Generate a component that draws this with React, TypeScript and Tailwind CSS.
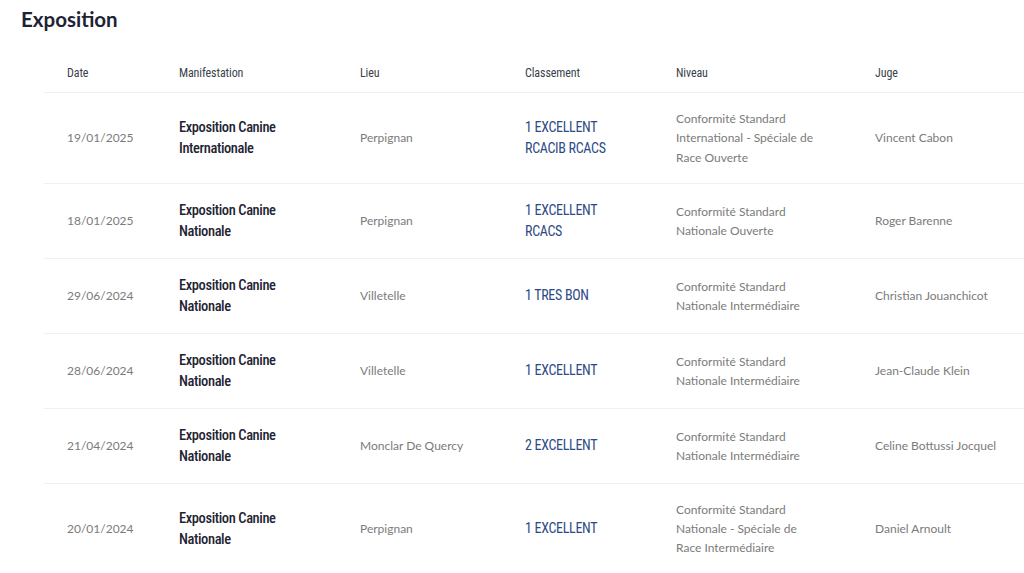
import React from "react";

type Row = {
  date: string;
  manifestation: string;
  lieu: string;
  classement: string;
  niveau: string;
  juge: string;
};

const rows: Row[] = [
  {
    date: "19/01/2025",
    manifestation: "Exposition Canine Internationale",
    lieu: "Perpignan",
    classement: "1 EXCELLENT RCACIB RCACS",
    niveau: "Conformité Standard International - Spéciale de Race Ouverte",
    juge: "Vincent Cabon",
  },
  {
    date: "18/01/2025",
    manifestation: "Exposition Canine Nationale",
    lieu: "Perpignan",
    classement: "1 EXCELLENT RCACS",
    niveau: "Conformité Standard Nationale Ouverte",
    juge: "Roger Barenne",
  },
  {
    date: "29/06/2024",
    manifestation: "Exposition Canine Nationale",
    lieu: "Villetelle",
    classement: "1 TRES BON",
    niveau: "Conformité Standard Nationale Intermédiaire",
    juge: "Christian Jouanchicot",
  },
  {
    date: "28/06/2024",
    manifestation: "Exposition Canine Nationale",
    lieu: "Villetelle",
    classement: "1 EXCELLENT",
    niveau: "Conformité Standard Nationale Intermédiaire",
    juge: "Jean-Claude Klein",
  },
  {
    date: "21/04/2024",
    manifestation: "Exposition Canine Nationale",
    lieu: "Monclar De Quercy",
    classement: "2 EXCELLENT",
    niveau: "Conformité Standard Nationale Intermédiaire",
    juge: "Celine Bottussi Jocquel",
  },
  {
    date: "20/01/2024",
    manifestation: "Exposition Canine Nationale",
    lieu: "Perpignan",
    classement: "1 EXCELLENT",
    niveau: "Conformité Standard Nationale - Spéciale de Race Intermédiaire",
    juge: "Daniel Arnoult",
  },
];

const cols = "grid grid-cols-[112px_181px_165px_151px_199px_1fr] pl-[23px]";
const narrow = "font-['Roboto_Condensed','Roboto',sans-serif]";
const body = "font-['Lato','Open_Sans',sans-serif]";

export default function App() {
  return (
    <div className="min-h-screen bg-white pt-[7px]">
      <h2
        className={`pl-[21px] text-[20.5px] font-bold leading-[24px] text-[#1e2235] ${body}`}
      >
        Exposition
      </h2>
      <div className="ml-[44px] mt-[23px]">
        {/* en-tête */}
        <div
          className={`${cols} border-b border-[#f0f0f0] py-[9px] text-[12px] leading-[20px] tracking-[-0.1px] text-[#3a3f4a] ${narrow}`}
        >
          <div>Date</div>
          <div>Manifestation</div>
          <div>Lieu</div>
          <div>Classement</div>
          <div>Niveau</div>
          <div>Juge</div>
        </div>
        {rows.map((r) => (
          <div
            key={r.date}
            className={`${cols} items-center border-b border-[#f0f0f0] py-4 text-[12px] text-[#7b7b7b] ${body}`}
          >
            <div>{r.date}</div>
            <div
              className={`max-w-[115px] text-[14.5px] font-medium leading-[21px] tracking-[-0.4px] text-[#1f2433] ${narrow}`}
            >
              {r.manifestation}
            </div>
            <div>{r.lieu}</div>
            <div
              className={`max-w-[100px] text-[14px] leading-[21px] tracking-[-0.3px] text-[#2c4a86] ${narrow}`}
            >
              {r.classement}
            </div>
            <div className="max-w-[142px] leading-[19.3px]">{r.niveau}</div>
            <div>{r.juge}</div>
          </div>
        ))}
      </div>
    </div>
  );
}
